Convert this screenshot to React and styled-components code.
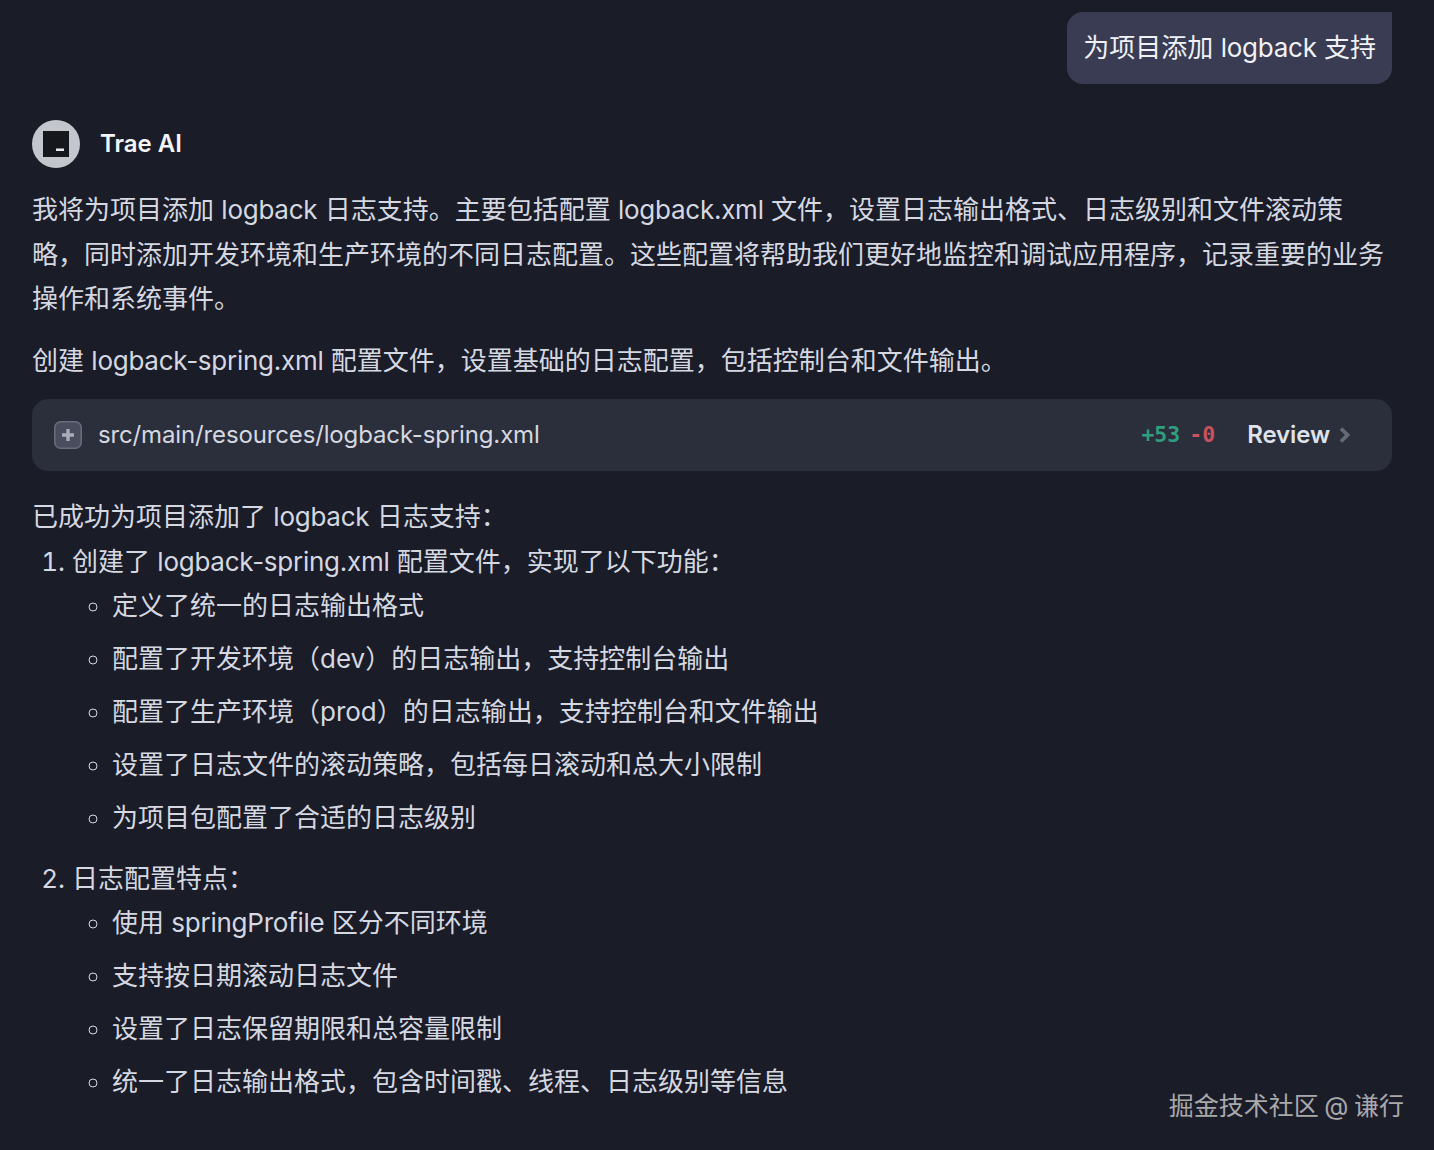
import React from "react";
import styled, { createGlobalStyle } from "styled-components";

const GlobalStyle = createGlobalStyle`
  html, body {
    margin: 0;
    padding: 0;
    background: #1a1c28;
  }
`;

const Page = styled.div`
  position: relative;
  box-sizing: border-box;
  height: 1150px;
  overflow: hidden;
  padding: 12px 42px 0 32px;
  font-family: Inter, "Noto Sans CJK SC", sans-serif;
  font-size: 26px;
  line-height: 44.5px;
  color: #d5d8e0;
`;

const Latin = styled.span`
  letter-spacing: -0.25px;
`;

const UserRow = styled.div`
  display: flex;
  justify-content: flex-end;
`;

const UserBubble = styled.div`
  padding: 14px 16px 13.5px;
  border-radius: 16px 0 16px 16px;
  background: #393c52;
  color: #f0f1f5;
`;

const AgentHeader = styled.div`
  display: flex;
  align-items: center;
  gap: 20px;
  margin-top: 36px;
  margin-bottom: 20px;
`;

const Avatar = styled.div`
  display: flex;
  align-items: center;
  justify-content: center;
  width: 48px;
  height: 48px;
  border-radius: 50%;
  background: #c4c6cd;
`;

const AgentName = styled.span`
  font-size: 24px;
  font-weight: 600;
  line-height: 48px;
  color: #f4f5f8;
`;

const Paragraph = styled.p`
  margin: 0 0 ${(p) => p.$gap ?? 17}px;
`;

const FileCard = styled.div`
  display: flex;
  align-items: center;
  height: 72px;
  margin-bottom: 24px;
  padding: 0 40px 0 22px;
  border-radius: 16px;
  background: #2b2e3b;
  font-size: 24px;
`;

const FileIcon = styled.svg`
  flex: none;
  margin-right: 16px;
`;

const FilePath = styled.span`
  flex: 1;
  letter-spacing: -0.14px;
`;

const DiffCount = styled.span`
  margin-left: ${(p) => p.$offset}px;
  font-family: "DejaVu Sans Mono", monospace;
  font-size: 21.5px;
  font-weight: 600;
  color: ${(p) => p.$color};
`;

const ReviewLabel = styled.span`
  margin-left: 32px;
  font-weight: 600;
  letter-spacing: -0.1px;
  color: #dfe2ea;
`;

const Chevron = styled.svg`
  flex: none;
  margin-left: 9px;
`;

const OrderedList = styled.ol`
  margin: 0;
  padding: 0 0 0 40px;
`;

const Step = styled.li`
  margin-bottom: 16.5px;
`;

const SubList = styled.ul`
  margin: -0.5px 0 0;
  padding: 0 0 0 40px;
  list-style-type: circle;
`;

const SubItem = styled.li`
  margin-bottom: 8.5px;
`;

const Watermark = styled.div`
  position: absolute;
  right: 30px;
  bottom: 22px;
  font-size: 25px;
  line-height: 44px;
  word-spacing: -1.5px;
  color: #a9a9ac;
`;

const STEPS = [
  {
    title: (
      <>
        创建了 <Latin>logback-spring.xml</Latin> 配置文件，实现了以下功能：
      </>
    ),
    items: [
      "定义了统一的日志输出格式",
      "配置了开发环境（dev）的日志输出，支持控制台输出",
      "配置了生产环境（prod）的日志输出，支持控制台和文件输出",
      "设置了日志文件的滚动策略，包括每日滚动和总大小限制",
      "为项目包配置了合适的日志级别",
    ],
  },
  {
    title: "日志配置特点：",
    items: [
      <>
        使用 <Latin>springProfile</Latin> 区分不同环境
      </>,
      "支持按日期滚动日志文件",
      "设置了日志保留期限和总容量限制",
      "统一了日志输出格式，包含时间戳、线程、日志级别等信息",
    ],
  },
];

export default function App() {
  return (
    <Page>
      <GlobalStyle />
      <UserRow>
        <UserBubble>
          为项目添加 <Latin>logback</Latin> 支持
        </UserBubble>
      </UserRow>
      <AgentHeader>
        <Avatar>
          <svg width="26" height="26" viewBox="0 0 26 26">
            <rect width="26" height="26" fill="#15171c" />
            <rect x="13" y="17.5" width="8" height="2.5" fill="#e8e9ec" />
          </svg>
        </Avatar>
        <AgentName>Trae AI</AgentName>
      </AgentHeader>
      <Paragraph>
        我将为项目添加 <Latin>logback</Latin> 日志支持。主要包括配置 <Latin>logback.xml</Latin>{" "}
        文件，设置日志输出格式、日志级别和文件滚动策略，同时添加开发环境和生产环境的不同日志配置。这些配置将帮助我们更好地监控和调试应用程序，记录重要的业务操作和系统事件。
      </Paragraph>
      <Paragraph $gap={16}>
        创建 <Latin>logback-spring.xml</Latin> 配置文件，设置基础的日志配置，包括控制台和文件输出。
      </Paragraph>
      <FileCard>
        <FileIcon width="28" height="28" viewBox="0 0 28 28">
          <rect x="0.75" y="0.75" width="26.5" height="26.5" rx="6" fill="#4a4d5e" stroke="#6a6d7d" strokeWidth="1.5" />
          <path d="M14 8v12M8 14h12" stroke="#a9acb9" strokeWidth="3.4" />
        </FileIcon>
        <FilePath>src/main/resources/logback-spring.xml</FilePath>
        <DiffCount $color="#2f9e7d">+53</DiffCount>
        <DiffCount $color="#c9525c" $offset={9}>-0</DiffCount>
        <ReviewLabel>Review</ReviewLabel>
        <Chevron width="13" height="18" viewBox="0 0 13 18" fill="none">
          <path d="M2 2.5l6.5 6.5-6.5 6.5" stroke="#666976" strokeWidth="3.8" />
        </Chevron>
      </FileCard>
      <Paragraph $gap={0.5}>
        已成功为项目添加了 <Latin>logback</Latin> 日志支持：
      </Paragraph>
      <OrderedList>
        {STEPS.map((step, i) => (
          <Step key={i}>
            {step.title}
            <SubList>
              {step.items.map((item, j) => (
                <SubItem key={j}>{item}</SubItem>
              ))}
            </SubList>
          </Step>
        ))}
      </OrderedList>
      <Watermark>掘金技术社区 @ 谦行</Watermark>
    </Page>
  );
}
